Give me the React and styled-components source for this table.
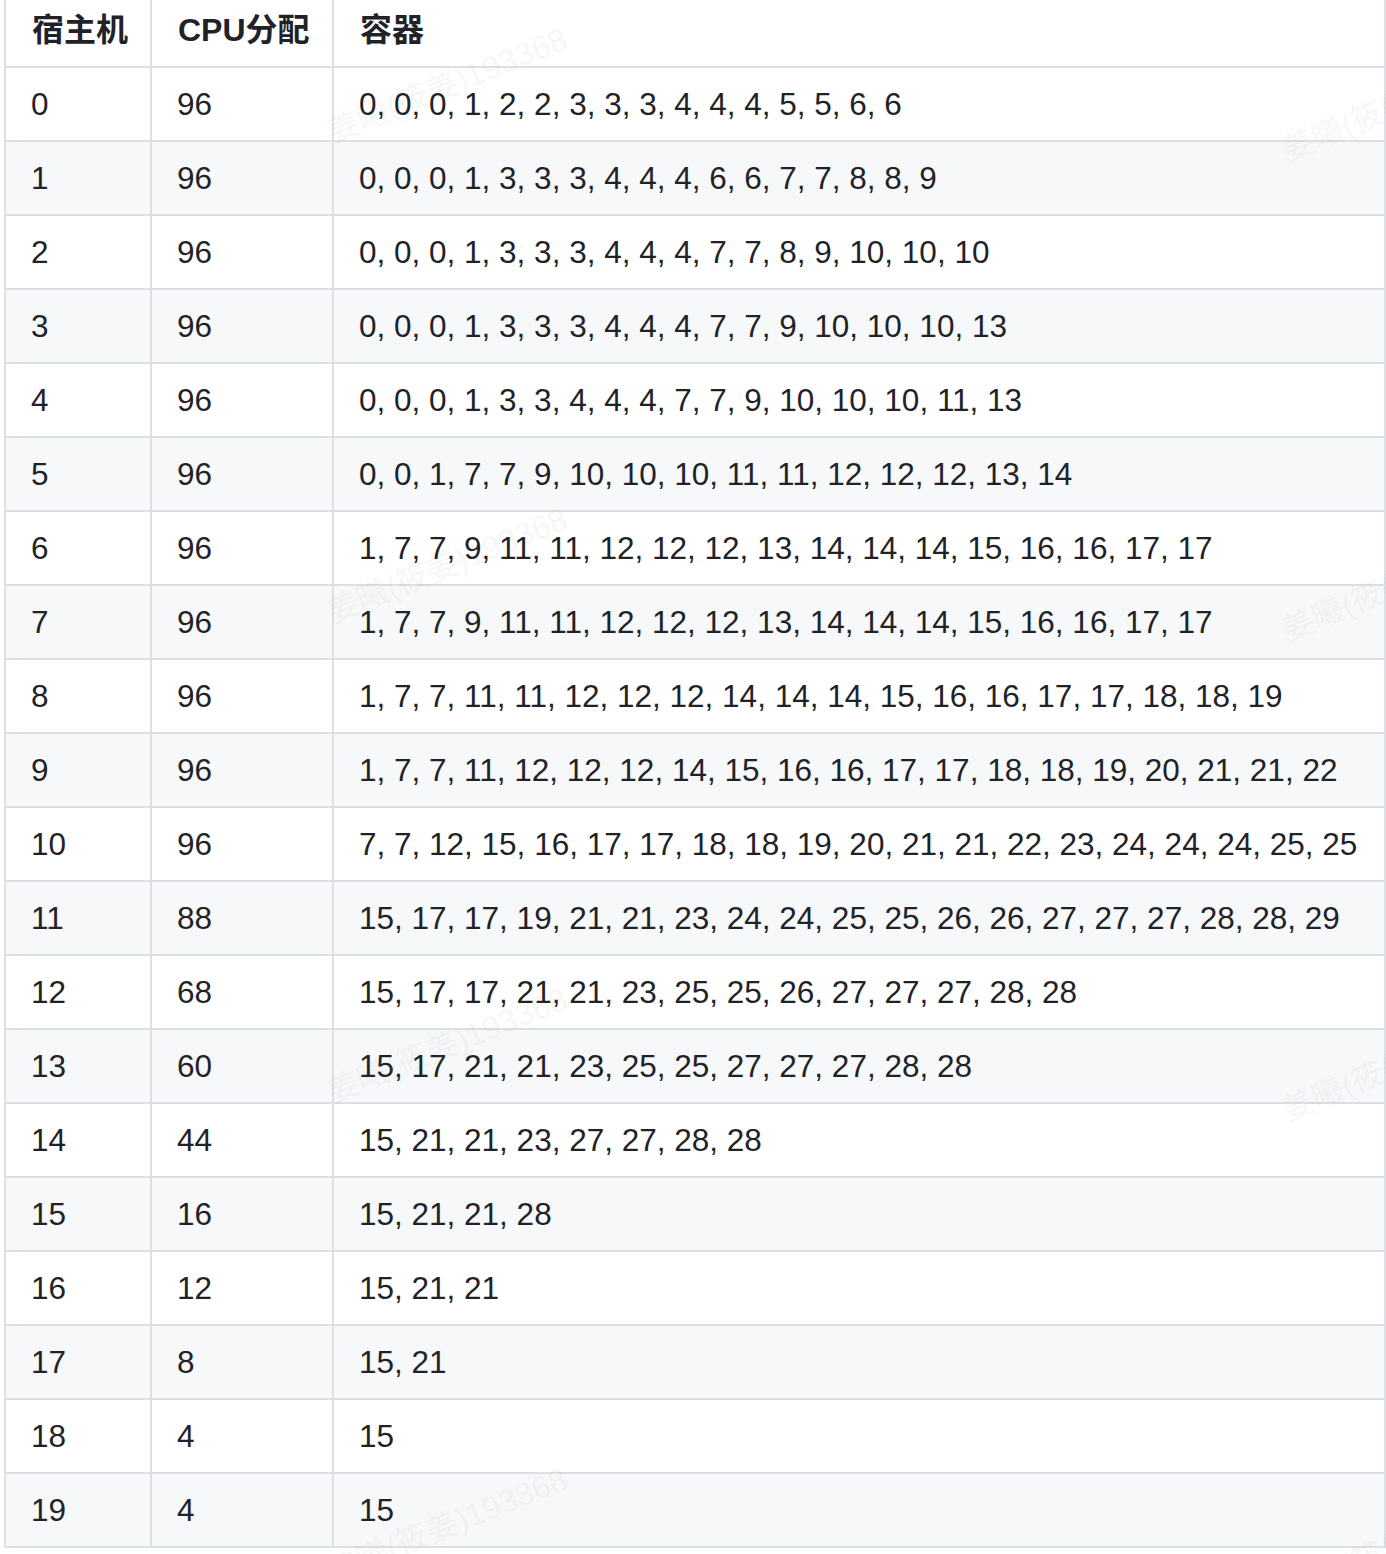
import styled, { createGlobalStyle } from "styled-components";

const GlobalStyle = createGlobalStyle`
	html, body {
		margin: 0;
		padding: 0;
		background: #fff;
		overflow: hidden;
	}
	body {
		font-family: "Liberation Sans", "Noto Sans CJK SC", sans-serif;
		color: #1f2328;
	}
`;

const rows = [
	["0", "96", "0, 0, 0, 1, 2, 2, 3, 3, 3, 4, 4, 4, 5, 5, 6, 6"],
	["1", "96", "0, 0, 0, 1, 3, 3, 3, 4, 4, 4, 6, 6, 7, 7, 8, 8, 9"],
	["2", "96", "0, 0, 0, 1, 3, 3, 3, 4, 4, 4, 7, 7, 8, 9, 10, 10, 10"],
	["3", "96", "0, 0, 0, 1, 3, 3, 3, 4, 4, 4, 7, 7, 9, 10, 10, 10, 13"],
	["4", "96", "0, 0, 0, 1, 3, 3, 4, 4, 4, 7, 7, 9, 10, 10, 10, 11, 13"],
	["5", "96", "0, 0, 1, 7, 7, 9, 10, 10, 10, 11, 11, 12, 12, 12, 13, 14"],
	["6", "96", "1, 7, 7, 9, 11, 11, 12, 12, 12, 13, 14, 14, 14, 15, 16, 16, 17, 17"],
	["7", "96", "1, 7, 7, 9, 11, 11, 12, 12, 12, 13, 14, 14, 14, 15, 16, 16, 17, 17"],
	["8", "96", "1, 7, 7, 11, 11, 12, 12, 12, 14, 14, 14, 15, 16, 16, 17, 17, 18, 18, 19"],
	["9", "96", "1, 7, 7, 11, 12, 12, 12, 14, 15, 16, 16, 17, 17, 18, 18, 19, 20, 21, 21, 22"],
	["10", "96", "7, 7, 12, 15, 16, 17, 17, 18, 18, 19, 20, 21, 21, 22, 23, 24, 24, 24, 25, 25"],
	["11", "88", "15, 17, 17, 19, 21, 21, 23, 24, 24, 25, 25, 26, 26, 27, 27, 27, 28, 28, 29"],
	["12", "68", "15, 17, 17, 21, 21, 23, 25, 25, 26, 27, 27, 27, 28, 28"],
	["13", "60", "15, 17, 21, 21, 23, 25, 25, 27, 27, 27, 28, 28"],
	["14", "44", "15, 21, 21, 23, 27, 27, 28, 28"],
	["15", "16", "15, 21, 21, 28"],
	["16", "12", "15, 21, 21"],
	["17", "8", "15, 21"],
	["18", "4", "15"],
	["19", "4", "15"],
];

// watermark stamps, repeating down the page
const marks = [0, 480, 960, 1440].flatMap((dy) => [
	{ x: 335, y: 150 + dy },
	{ x: 1290, y: 168 + dy },
]);

const Page = styled.div`
	position: relative;
	overflow: hidden;
	padding: 0 0 6px 4px;
`;

const Table = styled.table`
	border-collapse: collapse;
	table-layout: fixed;
	width: 1382px;
	font-size: 31.5px;
	line-height: 48px;
`;

const Col = styled.col`
	width: ${(p) => p.$w || "auto"};
`;

const HeadCell = styled.th`
	text-align: left;
	font-weight: 700;
	font-size: 32px;
	white-space: nowrap;
	padding: 6px 26px 12px;
	border: 2px solid #dcdfe3;
	border-top: 0;
`;

const Row = styled.tr`
	background: #fff;
	&:nth-child(2n) {
		background: #f6f8fa;
	}
`;

const Cell = styled.td`
	padding: 12px 25px;
	border: 2px solid #dcdfe3;
	white-space: nowrap;
`;

const Watermark = styled.span`
	position: absolute;
	left: ${(p) => p.$x}px;
	top: ${(p) => p.$y}px;
	transform-origin: 0 100%;
	transform: translateY(-100%) rotate(-22deg);
	font-size: 32px;
	line-height: 36px;
	white-space: nowrap;
	color: rgba(120, 120, 120, 0.07);
	pointer-events: none;
`;

export default function App() {
	return (
		<>
			<GlobalStyle />
			<Page>
				<Table>
					<colgroup>
						<Col $w="146px" />
						<Col $w="182px" />
						<Col />
					</colgroup>
					<thead>
						<tr>
							<HeadCell>宿主机</HeadCell>
							<HeadCell>CPU分配</HeadCell>
							<HeadCell>容器</HeadCell>
						</tr>
					</thead>
					<tbody>
						{rows.map((r) => (
							<Row key={r[0]}>
								<Cell>{r[0]}</Cell>
								<Cell>{r[1]}</Cell>
								<Cell>{r[2]}</Cell>
							</Row>
						))}
					</tbody>
				</Table>
				{marks.map((m, i) => (
					<Watermark key={i} $x={m.x} $y={m.y}>
						姜曦(筱姜)193368
					</Watermark>
				))}
			</Page>
		</>
	);
}
